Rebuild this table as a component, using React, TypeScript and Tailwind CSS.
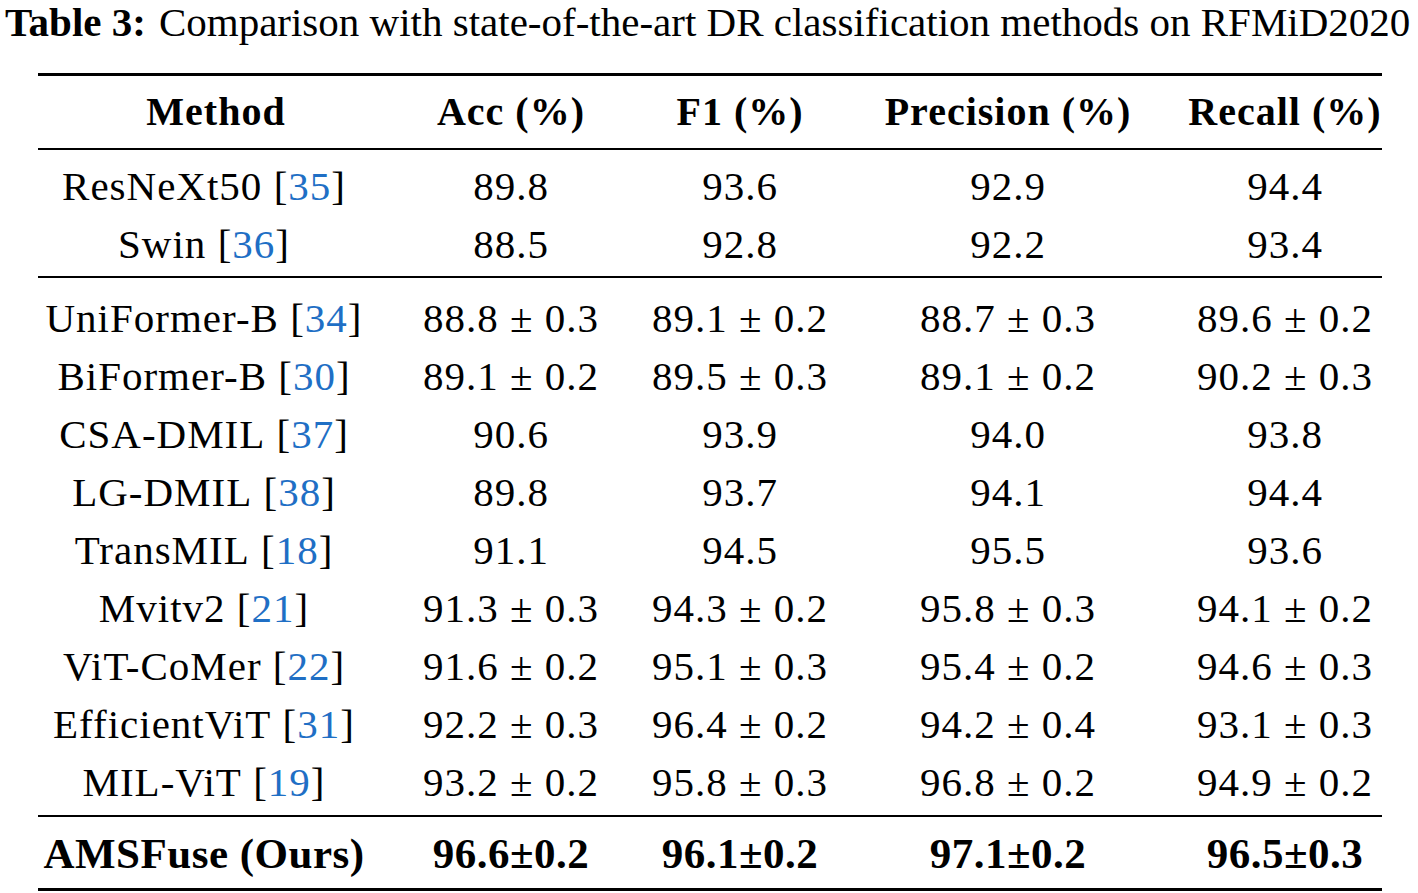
const serif = { fontFamily: '"Liberation Serif", "Times New Roman", serif' };

type Row = { name: string; cite: string; vals: string[] };

const baselines: Row[] = [
  { name: 'ResNeXt50', cite: '35', vals: ['89.8', '93.6', '92.9', '94.4'] },
  { name: 'Swin', cite: '36', vals: ['88.5', '92.8', '92.2', '93.4'] },
];

const others: Row[] = [
  { name: 'UniFormer-B', cite: '34', vals: ['88.8 ± 0.3', '89.1 ± 0.2', '88.7 ± 0.3', '89.6 ± 0.2'] },
  { name: 'BiFormer-B', cite: '30', vals: ['89.1 ± 0.2', '89.5 ± 0.3', '89.1 ± 0.2', '90.2 ± 0.3'] },
  { name: 'CSA-DMIL', cite: '37', vals: ['90.6', '93.9', '94.0', '93.8'] },
  { name: 'LG-DMIL', cite: '38', vals: ['89.8', '93.7', '94.1', '94.4'] },
  { name: 'TransMIL', cite: '18', vals: ['91.1', '94.5', '95.5', '93.6'] },
  { name: 'Mvitv2', cite: '21', vals: ['91.3 ± 0.3', '94.3 ± 0.2', '95.8 ± 0.3', '94.1 ± 0.2'] },
  { name: 'ViT-CoMer', cite: '22', vals: ['91.6 ± 0.2', '95.1 ± 0.3', '95.4 ± 0.2', '94.6 ± 0.3'] },
  { name: 'EfficientViT', cite: '31', vals: ['92.2 ± 0.3', '96.4 ± 0.2', '94.2 ± 0.4', '93.1 ± 0.3'] },
  { name: 'MIL-ViT', cite: '19', vals: ['93.2 ± 0.2', '95.8 ± 0.3', '96.8 ± 0.2', '94.9 ± 0.2'] },
];

const cols = 'grid grid-cols-[332px_282px_176px_360px_1fr]';
const cell = 'flex justify-center whitespace-nowrap';

function DataRow({ row }: { row: Row }) {
  return (
    <div className={`${cols} h-[58px] items-center text-[41px] tracking-[1px] text-black`}>
      <div className={cell}>
        {row.name}&nbsp;[<span className="text-[#1f6fc5]">{row.cite}</span>]
      </div>
      {row.vals.map((v, i) => (
        <div key={i} className={cell}>{v}</div>
      ))}
    </div>
  );
}

export default function App() {
  return (
    <div className="w-[1418px] h-[893px] bg-white overflow-hidden text-black" style={serif}>
      <div className="h-[73px] pl-[5px] text-[41px] leading-[44px] whitespace-nowrap">
        <span className="font-bold">Table 3:</span>
        <span className="ml-[13px]">Comparison with state-of-the-art DR classification methods on RFMiD2020</span>
      </div>
      <div className="ml-[38px] w-[1344px]">
        <div className="border-t-[3px] border-black" />
        <div className={`${cols} h-[72px] items-center text-[40px] font-bold tracking-[1px]`}>
          <div className={`${cell} pl-[24px]`}>Method</div>
          <div className={cell}>Acc (%)</div>
          <div className={cell}>F1 (%)</div>
          <div className={cell}>Precision (%)</div>
          <div className={cell}>Recall (%)</div>
        </div>
        <div className="border-t-[2px] border-black" />
        <div className="pt-[6px] pb-[4px]">
          {baselines.map((r) => (
            <DataRow key={r.name} row={r} />
          ))}
        </div>
        <div className="border-t-[2px] border-black" />
        <div className="pt-[10px] pb-[5px]">
          {others.map((r) => (
            <DataRow key={r.name} row={r} />
          ))}
        </div>
        <div className="border-t-[2px] border-black" />
        <div className={`${cols} h-[71px] pt-[4px] items-center text-[43px] font-bold tracking-[0.5px]`}>
          <div className={cell}>AMSFuse (Ours)</div>
          <div className={cell}>96.6±0.2</div>
          <div className={cell}>96.1±0.2</div>
          <div className={cell}>97.1±0.2</div>
          <div className={cell}>96.5±0.3</div>
        </div>
        <div className="border-t-[3px] border-black" />
      </div>
    </div>
  );
}
